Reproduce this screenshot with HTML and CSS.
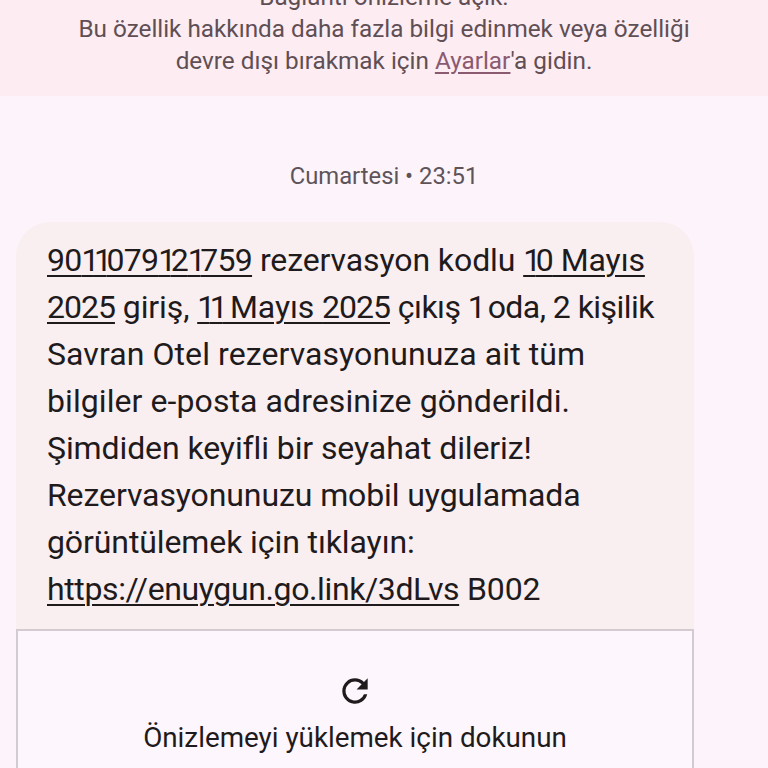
FILE: index.html
```html
<!DOCTYPE html>
<html lang="tr">
<head>
<meta charset="utf-8">
<title>Mesaj</title>
<link rel="stylesheet" href="styles.css">
</head>
<body>
<div class="screen">
  <section class="banner">
    <p>Bağlantı önizleme açık.</p>
    <p>Bu özellik hakkında daha fazla bilgi edinmek veya özelliği</p>
    <p>devre dışı bırakmak için <a class="settings" href="#">Ayarlar</a>'a gidin.</p>
  </section>
  <div class="timestamp">Cumartesi • 23:51</div>
  <article class="message">
    <div class="bubble">
      <p class="line"><a href="#" class="digits">90<span class="one">1</span><span class="one">1</span>079<span class="one">1</span>2<span class="one">1</span>759</a> rezervasyon kodlu <a href="#"><span class="one">1</span><span class="digits">0</span> Mayıs</a></p>
      <p class="line"><a href="#" class="tight">2025</a> giriş, <a href="#"><span class="one">1</span><span class="one">1</span> Mayıs <span class="tight">2025</span></a> <span class="narrow">çıkış <span class="one">1</span> oda, 2 kişilik</span></p>
      <p class="line wide">Savran Otel rezervasyonunuza ait tüm</p>
      <p class="line wide">bilgiler e-posta adresinize gönderildi.</p>
      <p class="line">Şimdiden keyifli bir seyahat dileriz!</p>
      <p class="line">Rezervasyonunuzu mobil uygulamada</p>
      <p class="line">görüntülemek için tıklayın:</p>
      <p class="line"><a href="#" class="url">https://enuygun.go.link/3dLvs</a> B002</p>
    </div>
    <div class="preview">
      <svg class="reload" viewBox="0 0 24 24" width="38" height="38" aria-hidden="true"><path d="M17.65 6.35A7.96 7.96 0 0 0 12 4a8 8 0 1 0 7.73 10h-2.08A6 6 0 1 1 12 6c1.66 0 3.14.69 4.22 1.78L13 11h7V4l-2.35 2.35z"/></svg>
      <div class="preview-text">Önizlemeyi yüklemek için dokunun</div>
    </div>
  </article>
</div>
</body>
</html>
```
FILE: styles.css
```css
* { box-sizing: border-box; }
html, body { margin: 0; padding: 0; }
body {
  width: 768px;
  height: 768px;
  overflow: hidden;
  background: #fdf3fb;
  font-family: Roboto, "Noto Sans", sans-serif;
}
p { margin: 0; }
.screen { display: flex; flex-direction: column; height: 768px; overflow: hidden; }
.banner {
  height: 96px;
  flex: none;
  background: #fdecf2;
  color: #5f4f55;
  font-size: 24.3px;
  line-height: 32px;
  text-align: center;
  display: flex;
  flex-direction: column;
  justify-content: flex-end;
  padding-bottom: 19px;
  overflow: hidden;
}
.settings { color: #8a5a70; text-decoration: underline; text-underline-offset: 3px; }
.timestamp {
  margin-top: 64px;
  height: 30px;
  line-height: 32px;
  text-align: center;
  color: #5d5459;
  font-size: 23.8px;
}
.message { margin: 32px 0 0 16px; width: 678px; }
.bubble {
  background: #f9eff0;
  border-radius: 34px 34px 0 0;
  padding: 15px 16px 16px 31px;
  color: #1f1a1c;
  font-size: 32px;
  letter-spacing: -0.1px;
}
.line { height: 47px; line-height: 47px; white-space: nowrap; }
.line a { color: inherit; text-decoration: underline; text-underline-offset: 4px; text-decoration-thickness: 2px; }
.wide { letter-spacing: 0.08px; }
.narrow { letter-spacing: -0.55px; }
.url { letter-spacing: -0.38px; }
.digits { letter-spacing: -0.75px; }
.tight { letter-spacing: -1px; }
.one { letter-spacing: -5.5px; }
.preview {
  height: 200px;
  border: 2px solid #d3cbd0;
  border-bottom: 0;
  background: #fdf6fc;
  display: flex;
  flex-direction: column;
  align-items: center;
  padding-top: 41px;
}
.reload { fill: #1f1a1c; flex: none; }
.preview-text { margin-top: 10px; font-size: 27.8px; line-height: 36px; color: #1f1a1c; }
```
